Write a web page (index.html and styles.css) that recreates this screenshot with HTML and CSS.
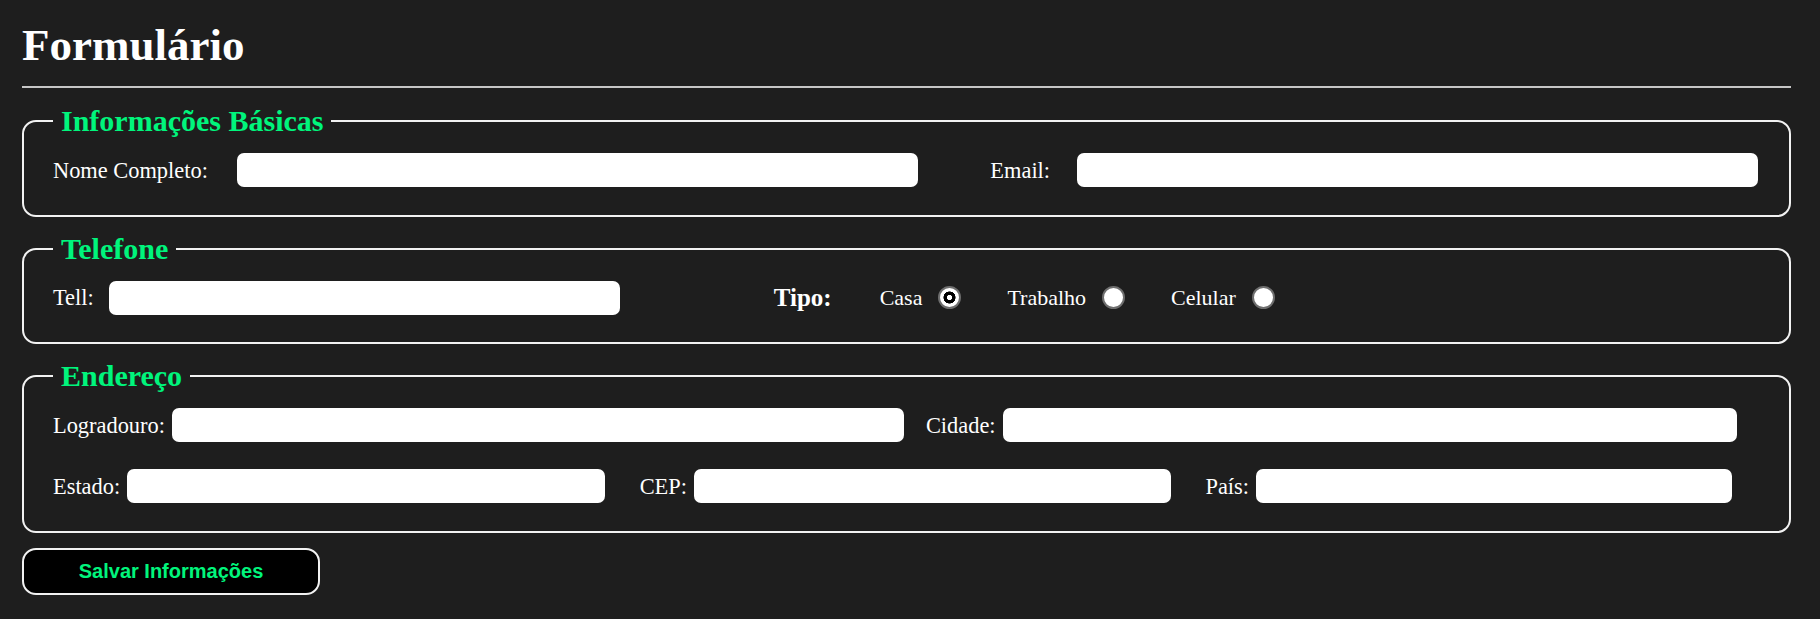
FILE: index.html
```html
<!DOCTYPE html>
<html lang="pt-BR">
<head>
<meta charset="utf-8">
<title>Formulário</title>
<link rel="stylesheet" href="styles.css">
</head>
<body>
<main class="page">
  <h1 class="title">Formulário</h1>
  <hr class="divider">
  <form class="form">
    <fieldset class="group">
      <legend class="group-title">Informações Básicas</legend>
      <div class="row">
        <label class="lbl lbl-nome" for="nome">Nome Completo:</label>
        <input class="txt w-681" id="nome" type="text">
        <label class="lbl lbl-email" for="email">Email:</label>
        <input class="txt w-681" id="email" type="email">
      </div>
    </fieldset>

    <fieldset class="group">
      <legend class="group-title">Telefone</legend>
      <div class="row">
        <label class="lbl lbl-tell" for="tell">Tell:</label>
        <input class="txt w-511" id="tell" type="tel">
        <span class="tipo">Tipo:</span>
        <div class="options">
          <label class="option">Casa <input class="radio" type="radio" name="tipo" checked></label>
          <label class="option">Trabalho <input class="radio" type="radio" name="tipo"></label>
          <label class="option">Celular <input class="radio" type="radio" name="tipo"></label>
        </div>
      </div>
    </fieldset>

    <fieldset class="group">
      <legend class="group-title">Endereço</legend>
      <div class="rows">
        <div class="row row-wide">
          <label class="field">Logradouro: <input class="txt w-732" type="text"></label>
          <label class="field">Cidade: <input class="txt w-734" type="text"></label>
        </div>
        <div class="row row-thirds">
          <label class="field">Estado: <input class="txt w-478" type="text"></label>
          <label class="field">CEP: <input class="txt w-477" type="text"></label>
          <label class="field">País: <input class="txt w-476" type="text"></label>
        </div>
      </div>
    </fieldset>

    <button class="save" type="button">Salvar Informações</button>
  </form>
</main>
</body>
</html>
```

FILE: styles.css
```css
html, body {
  margin: 0;
  padding: 0;
  background: #1e1e1e;
}

body {
  font-family: "Liberation Serif", "Times New Roman", serif;
  color: #ffffff;
}

.page {
  padding: 20px 29px 0 22px;
}

.title {
  margin: 0;
  font-size: 45px;
  line-height: 51px;
  font-weight: bold;
  color: #ffffff;
}

.divider {
  margin: 15px 0 16px;
  border: 0;
  border-top: 2px solid #c6c6c6;
  height: 0;
}

.form {
  display: flex;
  flex-direction: column;
  align-items: flex-start;
}

.group {
  align-self: stretch;
  margin: 0 0 15px;
  padding: 15px 30px 27.5px 29px;
  border: 2px solid #f2f2f2;
  border-radius: 14px;
  min-width: 0;
}

.group-title {
  padding: 0 8px;
  font-size: 30px;
  line-height: 34px;
  font-weight: bold;
  color: #00f57c;
}

.row {
  display: flex;
  align-items: center;
  height: 34px;
}

.rows {
  display: flex;
  flex-direction: column;
  gap: 27px;
}

.lbl,
.field,
.option {
  font-size: 22.4px;
  line-height: 25px;
  color: #ffffff;
  white-space: nowrap;
}

.option {
  font-size: 22px;
}

.txt {
  box-sizing: border-box;
  height: 34px;
  margin: 0;
  padding: 0 8px;
  border: 0;
  border-radius: 7px;
  background: #ffffff;
  font-family: "Liberation Sans", Arial, sans-serif;
  font-size: 16px;
  outline: none;
}

.w-681 { width: 681px; }
.w-511 { width: 511px; }
.w-732 { width: 732px; }
.w-734 { width: 734px; }
.w-478 { width: 478px; }
.w-477 { width: 477px; }
.w-476 { width: 476px; }

.lbl-nome { margin-right: 29px; }
.lbl-email { margin: 0 27px 0 72.5px; }
.lbl-tell { margin-right: 15px; }

.tipo {
  margin: 0 48px 0 154px;
  font-size: 25px;
  line-height: 28px;
  font-weight: bold;
  color: #ffffff;
}

.options {
  display: flex;
  align-items: center;
  gap: 46px;
}

.option {
  display: flex;
  align-items: center;
  gap: 16px;
}

.radio {
  appearance: none;
  -webkit-appearance: none;
  box-sizing: border-box;
  width: 23px;
  height: 23px;
  margin: 0;
  border: 2px solid #6e6e6e;
  border-radius: 50%;
  background: #ffffff;
}

.radio:checked {
  background: radial-gradient(circle, #ffffff 0 2.4px, #000000 2.9px 5.8px, #ffffff 6.3px);
}

.field {
  display: flex;
  align-items: center;
  gap: 7px;
}

.row-wide { gap: 22px; }
.row-thirds { gap: 34.5px; }

.save {
  box-sizing: border-box;
  width: 298px;
  height: 47px;
  margin: 0;
  padding: 0;
  border: 2px solid #f2f2f2;
  border-radius: 14px;
  background: #000000;
  color: #00f57c;
  font-family: "Liberation Sans", Arial, sans-serif;
  font-size: 20px;
  font-weight: bold;
  cursor: pointer;
}
```
